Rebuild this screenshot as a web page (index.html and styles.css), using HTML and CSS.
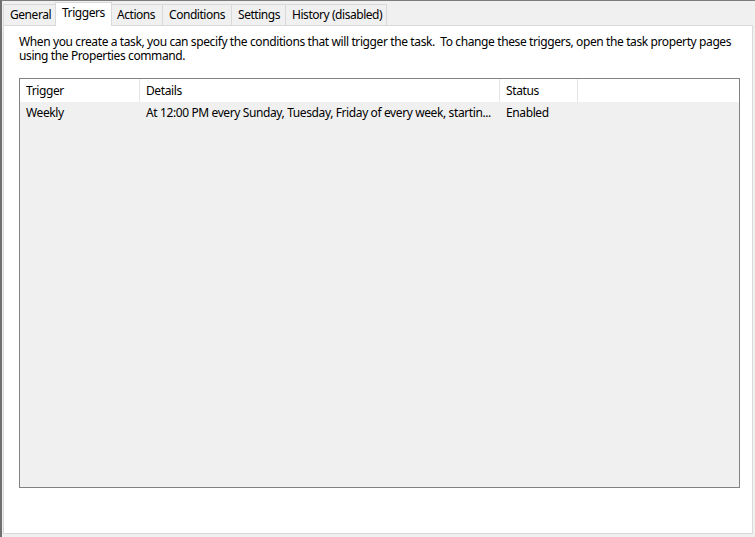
FILE: index.html
```html
<!DOCTYPE html>
<html>
<head>
<meta charset="utf-8">
<link rel="stylesheet" href="styles.css">
</head>
<body>
<div class="window">
  <div class="tabs">
    <div class="tab t-general">General</div>
    <div class="tab tab-active t-triggers">Triggers</div>
    <div class="tab t-actions">Actions</div>
    <div class="tab t-conditions">Conditions</div>
    <div class="tab t-settings">Settings</div>
    <div class="tab t-history">History (disabled)</div>
  </div>
  <div class="panel">
    <p class="intro">When you create a task, you can specify the conditions that will trigger the task.&nbsp; To change these triggers, open the task property pages<br>using the Properties command.</p>
    <div class="list">
      <div class="list-header">
        <div class="col col-trigger">Trigger</div>
        <div class="col col-details">Details</div>
        <div class="col col-status">Status</div>
        <div class="col col-rest"></div>
      </div>
      <div class="list-row">
        <div class="cell col-trigger">Weekly</div>
        <div class="cell col-details">At 12:00 PM every Sunday, Tuesday, Friday of every week, startin...</div>
        <div class="cell col-status">Enabled</div>
      </div>
    </div>
  </div>
</div>
</body>
</html>
```

FILE: styles.css
```css
* { box-sizing: border-box; }
html, body { margin: 0; padding: 0; }
body {
  width: 755px;
  height: 537px;
  overflow: hidden;
  background: #f0f0f0;
  font-family: "Noto Sans", "Open Sans", sans-serif;
  font-size: 12px;
  color: #000;
}
.window {
  width: 755px;
  height: 537px;
  border-top: 1px solid #7c7c7c;
  border-left: 2px solid #6f6f6f;
  display: flex;
  flex-direction: column;
  padding-left: 1px;
}
.tabs {
  display: flex;
  align-items: flex-end;
  height: 24px;
  position: relative;
  z-index: 1;
}
.tab {
  height: 21px;
  line-height: 20px;
  padding: 0 0 0 6px;
  background: #f0f0f0;
  border: 1px solid #d9d9d9;
  border-bottom: none;
  margin-right: -1px;
  white-space: nowrap;
  overflow: hidden;
  letter-spacing: -0.45px;
  color: #000;
}
.tab-active {
  height: 24px;
  line-height: 20px;
  background: #fff;
  position: relative;
  top: 1px;
  margin-left: -1px;
  margin-right: -2px;
  padding-left: 6px;
  z-index: 2;
}
.t-general { width: 54px; }
.t-triggers { width: 57px; }
.t-actions { width: 53px; }
.t-conditions { width: 70px; }
.t-settings { width: 55px; }
.t-history { width: 102px; }
.panel {
  width: 750px;
  height: 509px;
  background: #fff;
  border: 1px solid #d9d9d9;
  padding: 9px 0 0 15px;
  display: flex;
  flex-direction: column;
}
.intro {
  margin: 0;
  line-height: 14px;
  white-space: nowrap;
  letter-spacing: -0.39px;
  color: #000;
}
.list {
  margin-top: 15px;
  width: 721px;
  height: 410px;
  border: 1px solid #828282;
  background: #f0f0f0;
}
.list-header {
  display: flex;
  height: 23px;
  background: #fff;
}
.col {
  line-height: 22px;
  padding: 1px 0 0 6px;
  border-right: 1px solid #e5e5e5;
  white-space: nowrap;
  letter-spacing: -0.39px;
}
.col-trigger { width: 120px; }
.col-details { width: 360px; }
.col-status { width: 78px; }
.col-rest { flex: 1; border-right: none; }
.list-row {
  display: flex;
  height: 22px;
}
.cell {
  line-height: 20px;
  padding: 1px 0 0 6px;
  white-space: nowrap;
  overflow: hidden;
  letter-spacing: -0.39px;
}
```
